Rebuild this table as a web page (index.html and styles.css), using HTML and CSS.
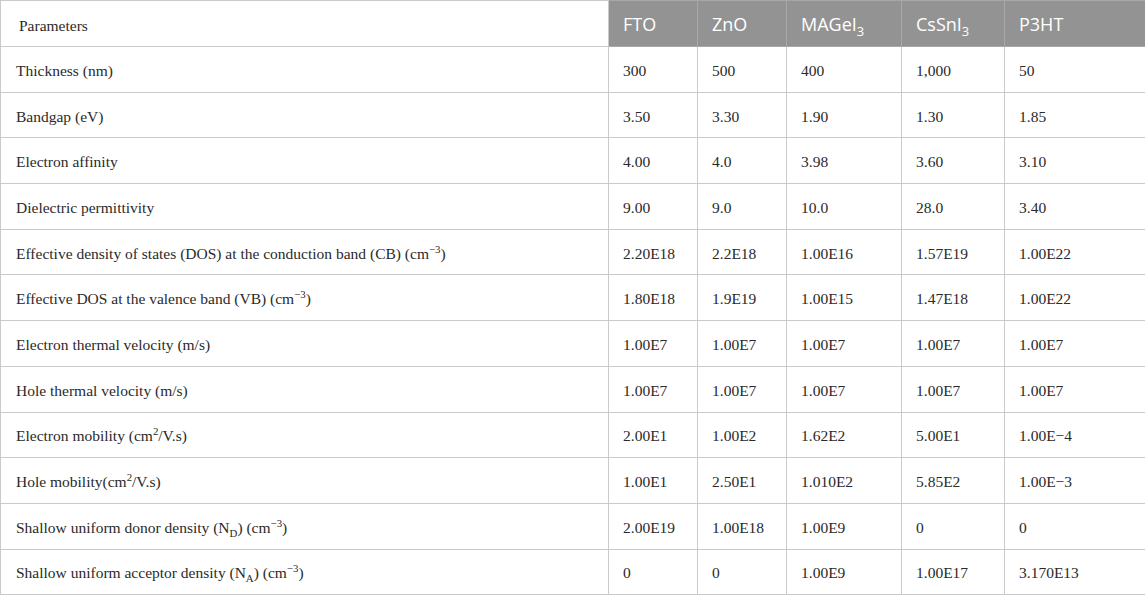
FILE: index.html
```html
<!DOCTYPE html>
<html>
<head>
<meta charset="utf-8">
<link rel="stylesheet" href="styles.css">
</head>
<body>
<table class="params">
<colgroup>
<col class="c-name"><col class="c-fto"><col class="c-zno"><col class="c-mag"><col class="c-cs"><col class="c-p3">
</colgroup>
<thead>
<tr>
<th class="h-name">Parameters</th>
<th class="h-mat">FTO</th>
<th class="h-mat">ZnO</th>
<th class="h-mat">MAGeI<sub>3</sub></th>
<th class="h-mat">CsSnI<sub>3</sub></th>
<th class="h-mat">P3HT</th>
</tr>
</thead>
<tbody>
<tr><td>Thickness (nm)</td><td>300</td><td>500</td><td>400</td><td>1,000</td><td>50</td></tr>
<tr><td>Bandgap (eV)</td><td>3.50</td><td>3.30</td><td>1.90</td><td>1.30</td><td>1.85</td></tr>
<tr><td>Electron affinity</td><td>4.00</td><td>4.0</td><td>3.98</td><td>3.60</td><td>3.10</td></tr>
<tr><td>Dielectric permittivity</td><td>9.00</td><td>9.0</td><td>10.0</td><td>28.0</td><td>3.40</td></tr>
<tr><td>Effective density of states (DOS) at the conduction band (CB) (cm<sup>−3</sup>)</td><td>2.20E18</td><td>2.2E18</td><td>1.00E16</td><td>1.57E19</td><td>1.00E22</td></tr>
<tr><td>Effective DOS at the valence band (VB) (cm<sup>−3</sup>)</td><td>1.80E18</td><td>1.9E19</td><td>1.00E15</td><td>1.47E18</td><td>1.00E22</td></tr>
<tr><td>Electron thermal velocity (m/s)</td><td>1.00E7</td><td>1.00E7</td><td>1.00E7</td><td>1.00E7</td><td>1.00E7</td></tr>
<tr><td>Hole thermal velocity (m/s)</td><td>1.00E7</td><td>1.00E7</td><td>1.00E7</td><td>1.00E7</td><td>1.00E7</td></tr>
<tr><td>Electron mobility (cm<sup>2</sup>/V.s)</td><td>2.00E1</td><td>1.00E2</td><td>1.62E2</td><td>5.00E1</td><td>1.00E−4</td></tr>
<tr><td>Hole mobility(cm<sup>2</sup>/V.s)</td><td>1.00E1</td><td>2.50E1</td><td>1.010E2</td><td>5.85E2</td><td>1.00E−3</td></tr>
<tr><td>Shallow uniform donor density (N<sub>D</sub>) (cm<sup>−3</sup>)</td><td>2.00E19</td><td>1.00E18</td><td>1.00E9</td><td>0</td><td>0</td></tr>
<tr><td>Shallow uniform acceptor density (N<sub>A</sub>) (cm<sup>−3</sup>)</td><td>0</td><td>0</td><td>1.00E9</td><td>1.00E17</td><td>3.170E13</td></tr>
</tbody>
</table>
</body>
</html>
```
FILE: styles.css
```css
html, body {
  margin: 0;
  padding: 0;
  background: #ffffff;
}

.params {
  border-collapse: collapse;
  table-layout: fixed;
  width: 1146px;
  font-family: "Liberation Serif", "Times New Roman", serif;
  font-size: 15.5px;
  color: #2a2a2a;
}

.c-name { width: 608px; }
.c-fto { width: 89px; }
.c-zno { width: 89px; }
.c-mag { width: 115px; }
.c-cs { width: 103px; }
.c-p3 { width: 142px; }

.params th,
.params td {
  border: 1px solid #cacaca;
  text-align: left;
  vertical-align: middle;
  padding: 3px 14px 0;
  white-space: nowrap;
}

.params thead th {
  height: 40px;
  font-weight: normal;
}

.params .h-name {
  background: #ffffff;
  color: #2a2a2a;
  padding: 5px 14px 0 18px;
  font-family: "Liberation Serif", "Times New Roman", serif;
  font-size: 15.5px;
}

.params .h-mat {
  background: #939393;
  color: #ffffff;
  font-family: "Open Sans", "Noto Sans", sans-serif;
  font-size: 18px;
  padding: 0 14px 0;
  border-color: #a8a8a8;
}

.params tbody td {
  height: 41.7px;
}

.params td:first-child {
  padding-left: 15px;
}

.params sup,
.params sub {
  font-size: 0.7em;
  line-height: 0;
}

.params .h-mat sub {
  font-size: 0.72em;
  vertical-align: -0.35em;
}
```
